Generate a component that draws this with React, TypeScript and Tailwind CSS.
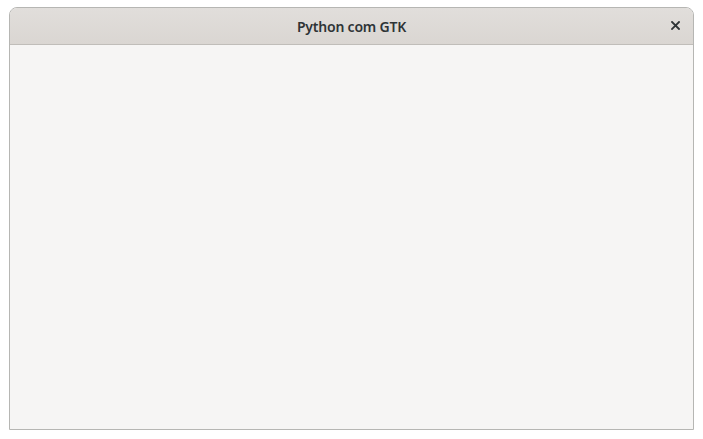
export default function App() {
  return (
    <div className="w-[703px] h-[439px] bg-white pt-[7px] pl-[9px]">
      <div className="w-[685px] h-[423px] flex flex-col border border-[#b6b6b3] rounded-t-[8px] overflow-hidden bg-[#f6f5f4]">
        <div className="h-[37px] shrink-0 flex items-center justify-center relative bg-gradient-to-b from-[#e1dedb] to-[#dad6d2] border-b border-[#c0bdb9]">
          <span className="text-[14px] font-semibold text-[#2e3436] tracking-[-0.2px]" style={{ fontFamily: '"Noto Sans", "Open Sans", sans-serif' }}>
            Python com GTK
          </span>
          <svg className="absolute left-[661px] top-[13px]" width="9" height="9" viewBox="0 0 9 9">
            <path d="M1 1 L8 8 M8 1 L1 8" stroke="#2e3436" strokeWidth="1.8" strokeLinecap="square" />
          </svg>
        </div>
        <div className="flex-1" />
      </div>
    </div>
  );
}
